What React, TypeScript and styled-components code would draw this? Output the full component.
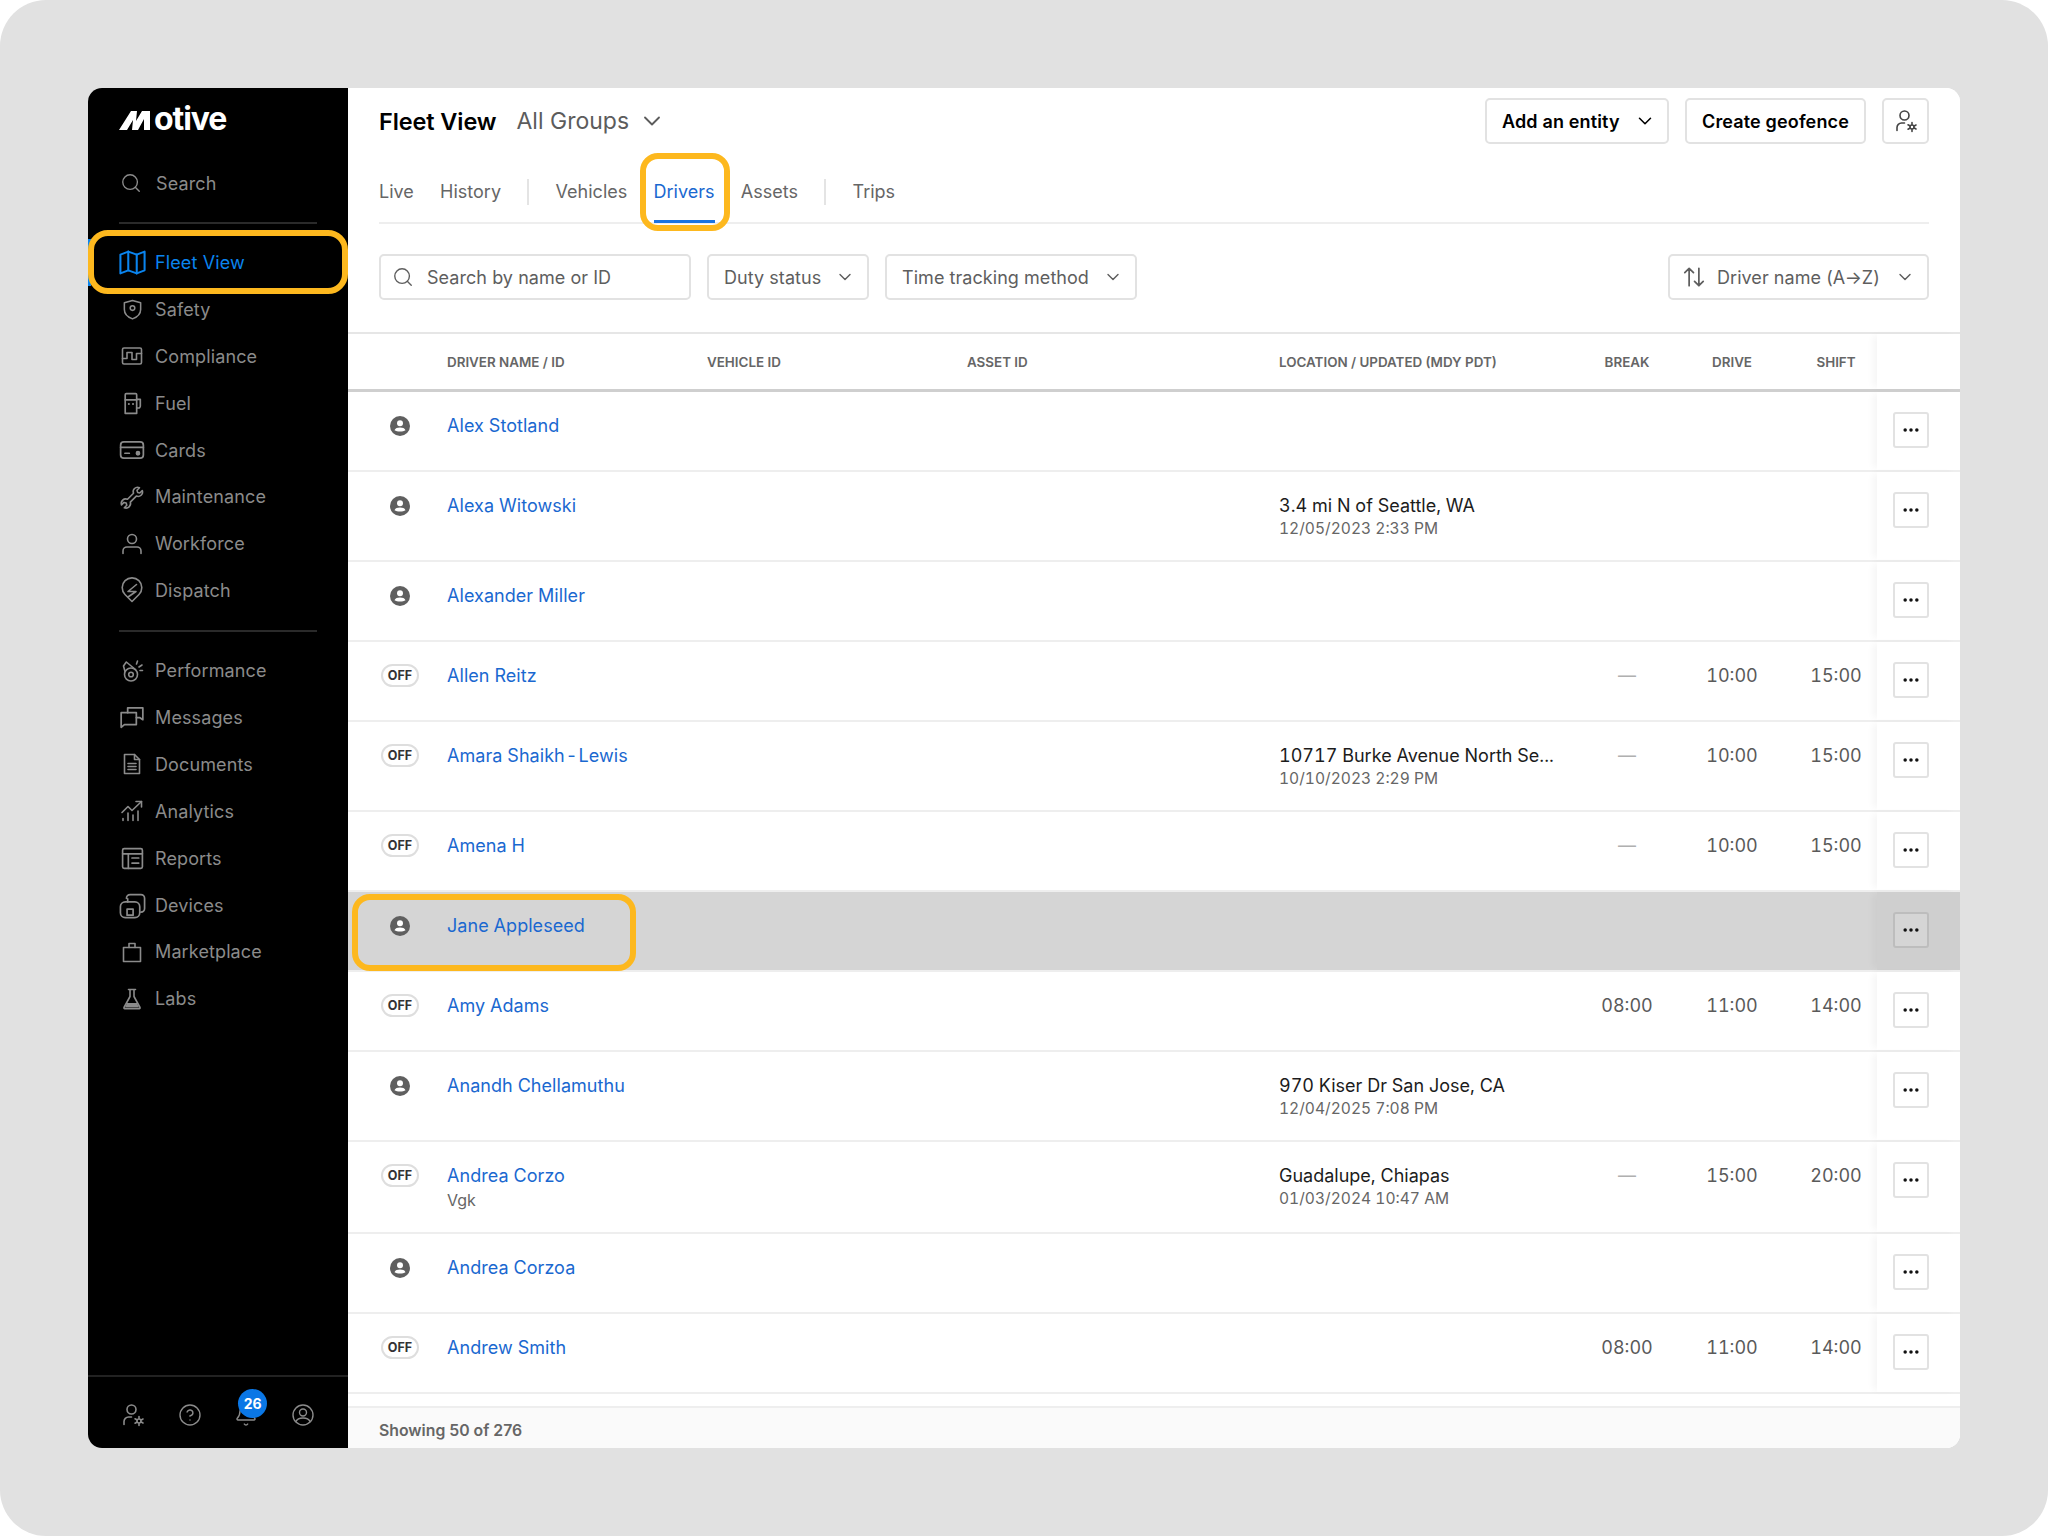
import React from 'react';
import styled, { createGlobalStyle } from 'styled-components';
import { ChevronDown, Search as SearchIcon, Bell, CircleHelp, Ellipsis } from 'lucide-react';

const Global = createGlobalStyle`
  html, body { margin: 0; padding: 0; background: #fff; }
  * { box-sizing: border-box; }
  body { font-family: Inter, "Liberation Sans", sans-serif; }
`;

const Frame = styled.div`
  width: 2048px; height: 1536px; padding: 88px;
  background: #e1e1e1; border-radius: 46px;
`;
const Shell = styled.div`
  display: grid; grid-template-columns: 260px 1612px; height: 1360px;
  border-radius: 14px; overflow: hidden; background: #fff;
`;
const Sidebar = styled.aside`
  background: #000; display: flex; flex-direction: column; color: #8b8b8b;
`;
const LogoRow = styled.div`
  display: flex; align-items: baseline; height: 62px; padding: 14px 0 0 31px;
`;
const LogoWord = styled.span`
  color: #fff; font-size: 32px; font-weight: 700; letter-spacing: -1.1px; line-height: 34px; margin-left: 1px;
`;
const SideSearch = styled.div`
  display: flex; align-items: center; height: 44px; margin-top: 11px; padding-left: 32px; gap: 14px;
  font-size: 18px; letter-spacing: 0.12px;
`;
const SideRule = styled.div<{ $top?: number }>`
  height: 2px; margin: ${p => p.$top ?? 0}px 31px 0; background: #2a2a2a;
`;
const SideGroup = styled.nav`
  display: flex; flex-direction: column; padding: 15px 0 16px;
`;
const NavItem = styled.div<{ $active?: boolean }>`
  position: relative; display: flex; align-items: center; height: 46.9px; padding-left: 31px;
  font-size: 18px; letter-spacing: 0.12px; color: ${p => (p.$active ? '#0a84ee' : '#8b8b8b')};
  ${p => p.$active && 'box-shadow: inset 3px 0 0 #0a84ee;'}
`;
const IconSlot = styled.span`
  display: flex; width: 26px; height: 26px; align-items: center; justify-content: center;
  margin-right: 10px; flex: none;
  svg { overflow: visible; }
`;
const SideFlag = styled.div`
  position: absolute; left: 0; top: -9px; width: 260px; height: 64px;
  border: 6px solid #fdb81e; border-radius: 20px; pointer-events: none;
`;
const SideFoot = styled.div`
  margin-top: auto; height: 73px; border-top: 2px solid #222;
  display: grid; grid-template-columns: repeat(4, 56.5px); padding: 4px 0 0 17px; align-items: center;
  justify-items: center;
`;
const BellWrap = styled.span`
  position: relative; display: flex;
`;
const Badge = styled.span`
  position: absolute; left: 4px; top: -14px; width: 29px; height: 29px; border-radius: 50%;
  background: #0a77e6; color: #fff; font-size: 14px; font-weight: 700;
  display: flex; align-items: center; justify-content: center;
`;
const Main = styled.main`
  display: flex; flex-direction: column; min-width: 0; background: #fff;
`;
const TopBar = styled.header`
  display: flex; align-items: center; padding: 10px 31px 0; height: 56px;
`;
const PageTitle = styled.h1`
  margin: 0; font-size: 23.5px; font-weight: 600; color: #000; letter-spacing: -0.1px;
`;
const GroupPick = styled.div`
  display: flex; align-items: center; gap: 9px; margin-left: 20px; font-size: 23px; color: #5c5c5c;
`;
const TopActions = styled.div`
  margin-left: auto; display: flex; gap: 16px;
`;
const ActionButton = styled.button<{ $w?: number }>`
  height: 46px; width: ${p => p.$w ?? 181}px; display: flex; align-items: center; justify-content: space-between;
  padding: 0 11px 0 15px;
  background: #fff; border: 2px solid #e2e2e2; border-radius: 5px;
  font: 600 18px Inter, sans-serif; letter-spacing: 0.15px; color: #000; white-space: nowrap;
`;
const IconButton = styled(ActionButton)`
  width: 47px; padding: 0; justify-content: center; color: #444;
`;
const Tabs = styled.div`
  display: flex; align-items: stretch; height: 69px; margin: 11px 31px 0;
  border-bottom: 2px solid #eeeeee;
`;
const Tab = styled.div<{ $active?: boolean }>`
  position: relative; display: flex; align-items: center; height: 67px; padding-top: 6px;
  margin-right: 26.3px; font-size: 18px; color: ${p => (p.$active ? '#1a68d0' : '#666')};
  ${p => p.$active && `&::after { content: ''; position: absolute; left: 0; right: 0; bottom: -1px; height: 3px; background: #1a73e0; }`}
`;
const TabRule = styled.div`
  width: 2px; height: 26px; background: #e4e4e4; margin: 24px 26.3px 0 0;
`;
const TabFlag = styled.div`
  position: absolute; left: -14px; right: -15px; top: -2px; bottom: -9px;
  border: 6px solid #fdb81e; border-radius: 18px; pointer-events: none;
`;
const Filters = styled.div`
  display: flex; gap: 16px; margin: 30px 31px 0;
`;
const Field = styled.div<{ $w: number; $push?: boolean }>`
  width: ${p => p.$w}px; height: 46px; display: flex; align-items: center;
  padding: 0 12px 0 15px; border: 2px solid #e2e2e2; border-radius: 5px;
  font-size: 18px; letter-spacing: 0.05px; color: #5e5e5e; flex: none;
  ${p => p.$push && 'margin-left: auto;'}
`;
const FieldLabel = styled.span`
  flex: 1; white-space: nowrap;
`;
const FieldLead = styled.span<{ $gap: number }>`
  display: flex; margin: 0 ${p => p.$gap}px 0 -4px;
`;
const TableHead = styled.div`
  display: grid; grid-template-columns: 99px 260px 260px 312px 303px 90px 120px 85px 83px;
  height: 60px; margin-top: 32px; align-items: center;
  border-top: 2px solid #e6e6e6; border-bottom: 3px solid #cfcfcf;
  font-size: 13.4px; font-weight: 600; color: #666;
`;
const HeadCenter = styled.span<{ $nudge?: number }>`
  text-align: center; padding-left: ${p => p.$nudge ?? 0}px;
`;
const HeadLead = styled.span``;
const HeadPin = styled.span`
  align-self: stretch; box-shadow: -6px 0 7px -2px rgba(0,0,0,.04);
`;
const Rows = styled.div`
  flex: 1; min-height: 0; overflow: hidden;
`;
const Row = styled.div<{ $picked?: boolean }>`
  position: relative; display: grid;
  grid-template-columns: 99px 260px 260px 312px 303px 90px 120px 85px 83px;
  border-bottom: 2px solid #eeeeee; background: ${p => (p.$picked ? '#d5d5d5' : '#fff')};
  font-size: 18px; line-height: 24px; font-variant-numeric: tabular-nums;
`;
const Cell = styled.div`
  padding: 22px 0 20px;
  min-height: 78px;
`;
const StatusCell = styled(Cell)`
  padding-left: 33px;
`;
const StatusBox = styled.div`
  width: 38px; height: 24px; display: flex; align-items: center; justify-content: center;
`;
const OffPill = styled.span`
  width: 38px; height: 23px; border: 2px solid #dedede; border-radius: 12px; background: #fff;
  font-size: 12.5px; font-weight: 700; color: #333; line-height: 19px; text-align: center; margin-top: -2px;
`;
const DriverName = styled.div`
  color: #1a68d0; letter-spacing: 0.05px;
`;
const NameHyphen = styled.span`
  margin: 0 1px;
`;
const SubText = styled.div`
  font-size: 16px; line-height: 24px; color: #666;
`;
const LocationText = styled.div`
  color: #1c1c1c; white-space: nowrap;
`;
const LocationDate = styled(SubText)`
  font-size: 15.6px; line-height: 22px;
`;
const TimeCell = styled(Cell)<{ $nudge?: number }>`
  text-align: center; color: #5a5a5a; padding-left: ${p => p.$nudge ?? 0}px;
`;
const Dash = styled.span`
  color: #b0b0b0;
`;
const PinCell = styled(Cell)<{ $picked?: boolean }>`
  padding: 20px 0 22px 16px; box-shadow: -6px 0 7px -2px rgba(0,0,0,.04);
  background: ${p => (p.$picked ? '#cfcfcf' : '#fff')};
`;
const MoreButton = styled.button<{ $picked?: boolean }>`
  width: 36px; height: 36px; padding: 0; display: flex; align-items: center; justify-content: center;
  background: ${p => (p.$picked ? '#d5d5d5' : '#fff')}; color: #111;
  border: 2px solid ${p => (p.$picked ? '#bdbdbd' : '#e2e2e2')}; border-radius: 3px;
`;
const RowFlag = styled.div`
  position: absolute; left: 4px; top: 2px; width: 284px; height: 77px;
  border: 6px solid #fdb81e; border-radius: 18px; pointer-events: none;
`;
const Foot = styled.footer`
  height: 42px; background: #fafafa; border-top: 2px solid #eee; padding: 4px 31px 0;
  display: flex; align-items: center; font-size: 15.8px; font-weight: 600; color: #666;
`;
const LogoMark = styled.svg`
  flex: none;
`;

const Svg = ({ s = 24, w = 1.6, children }: { s?: number; w?: number; children: React.ReactNode }) => (
  <svg width={s} height={s} viewBox="0 0 24 24" fill="none" stroke="currentColor" strokeWidth={w} strokeLinecap="round" strokeLinejoin="round">
    {children}
  </svg>
);

const icons: Record<string, React.ReactNode> = {
  map: <Svg s={29} w={1.7}><path d="M2 5.5 8.5 3l7 2.5L22 3v15.5L15.5 21l-7-2.5L2 21z" /><path d="M8.5 3v15.5M15.5 5.5V21" /></Svg>,
  shield: <Svg s={23}><path d="M12 2.5 20.5 5v7c0 4.8-3.6 8-8.5 9.8C7.100 20 3.500 16.800 3.500 12V5z" /><circle cx="12" cy="10.500" r="2.400" /></Svg>,
  compliance: <Svg s={24}><rect x="2.500" y="4" width="19" height="16" rx="1.500" /><path d="M2.500 14.500H7V8.500h5V15.500h4.500v-6h5" /></Svg>,
  fuel: <Svg s={25}><path d="M5 21.500V3.500a1 1 0 0 1 1-1h9a1 1 0 0 1 1 1v18z" /><path d="M5 8.500h11M16 8h3.500v6.500a1.800 1.800 0 0 1-2 1.800H16" /><path d="M8.500 12.500h.01M12.500 12.500h.01" strokeWidth="2" /></Svg>,
  card: <Svg s={26}><rect x="1.500" y="4.500" width="21" height="15" rx="3" /><path d="M1.500 9.500h21M5.500 15h4" /><circle cx="17.500" cy="15" r="1.400" fill="currentColor" /></Svg>,
  wrench: <Svg s={24}><path d="M14.500 3.500a4.500 4.500 0 0 1 5-.8L17 5.200l.6 2.200 2.200.6 2.500-2.500a4.500 4.500 0 0 1-6 5.600l-6 6a4.500 4.500 0 0 1-6 5.600l2.500-2.500-.6-2.200-2.200-.6-2.500 2.500a4.500 4.500 0 0 1 6-5.600l6-6a4.500 4.500 0 0 1 1-4.800z" /></Svg>,
  user: <Svg s={24}><circle cx="12" cy="7" r="4.500" /><path d="M3 21.500V19a4 4 0 0 1 4-4h10a4 4 0 0 1 4 4v2.500" /></Svg>,
  dispatch: <Svg s={24}><path d="M12 22.500 5 15.500a9.800 9.800 0 1 1 14 0z" /><path d="M16.500 5.500 8 12.500h8L8 18" /></Svg>,
  perf: <Svg s={24}><circle cx="11" cy="15.500" r="6.500" /><circle cx="11" cy="15.500" r="2.300" /><path d="M5 12.500 3.500 7l2.800-4 9.200 7.500M16.500 5l1-3M19 8l3-2M20 11.500h2.500" /></Svg>,
  messages: <Svg s={26}><path d="M8 8V3.500h14v11l-3-2h-3" /><path d="M2 8h14v11H5l-3 2.500z" /></Svg>,
  doc: <Svg s={24}><path d="M4.500 2.500h10l5 5v14h-15z" /><path d="M14.500 2.500v5h5M8 11.500h8M8 14.500h8M8 17.500h8" /></Svg>,
  analytics: <Svg s={24}><path d="M2 13.500 8 7.500l4 4 9.500-9" /><path d="M16 2.500h5.500V8" /><path d="M3 21.500v-2M8 21.500V14M13 21.500V16M18 21.500v-9.500" /></Svg>,
  reports: <Svg s={25}><rect x="2.500" y="2.500" width="19" height="19" rx="1.500" /><path d="M2.500 7.500h19M8 7.500v14M11.500 11.500h6.500M11.500 16.500h6.500" /></Svg>,
  devices: <Svg s={29} w={1.4}><path d="M7 6a3 3 0 0 1 3-3h9a3 3 0 0 1 3 3v8.500a3 3 0 0 1-3 3" /><rect x="2" y="9" width="16" height="13" rx="4" /><rect x="7.500" y="15" width="5" height="5" /><path d="M8 9V6.500" /></Svg>,
  bag: <Svg s={24}><path d="M3.500 7.500h17v14h-17z" /><path d="M9 7.500V3.500h6v4" /></Svg>,
  flask: <Svg s={24}><path d="M8.500 2.500h7M10 2.500v7L4 20.500a.8.8 0 0 0 .8 1.200h14.400a.8.8 0 0 0 .8-1.200L14 9.500v-7" /><path d="M7 16h10l2 4.500H5z" fill="currentColor" stroke="none" /></Svg>,
  userCog: <Svg s={24}><circle cx="10.500" cy="6.500" r="4.500" /><path d="M3 21.500v-3a4.500 4.500 0 0 1 4.500-4.500h3" /><circle cx="18" cy="18" r="2" /><path d="M18 13.500v2M18 20.500v2M14 15.800l1.800 1M20.200 19l1.800 1M14 20.200l1.800-1M20.200 17l1.800-1" /></Svg>,
  circleUser: <Svg s={24} w={1.4}><circle cx="12" cy="12" r="10" /><circle cx="12" cy="9.500" r="3.500" /><path d="M5 18.500c1-2.500 3-3.500 7-3.500s6 1 7 3.500" /></Svg>,
  sort: <Svg s={26}><path d="M7.500 20V4M3.500 8l4-4 4 4M16.500 4v16M12.500 16l4 4 4-4" /></Svg>,
};

const nav1 = [
  ['shield', 'Safety'], ['compliance', 'Compliance'], ['fuel', 'Fuel'], ['card', 'Cards'],
  ['wrench', 'Maintenance'], ['user', 'Workforce'], ['dispatch', 'Dispatch'],
];
const nav2 = [
  ['perf', 'Performance'], ['messages', 'Messages'], ['doc', 'Documents'], ['analytics', 'Analytics'],
  ['reports', 'Reports'], ['devices', 'Devices'], ['bag', 'Marketplace'], ['flask', 'Labs'],
];

type Driver = { name: string; off?: boolean; sub?: string; loc?: string; date?: string; t?: [string, string, string]; picked?: boolean };
const duty: [string, string, string] = ['—', '10:00', '15:00'];
const drivers: Driver[] = [
  { name: 'Alex Stotland' },
  { name: 'Alexa Witowski', loc: '3.4 mi N of Seattle, WA', date: '12/05/2023 2:33 PM' },
  { name: 'Alexander Miller' },
  { name: 'Allen Reitz', off: true, t: duty },
  { name: 'Amara Shaikh-Lewis', off: true, loc: '10717 Burke Avenue North Se...', date: '10/10/2023 2:29 PM', t: duty },
  { name: 'Amena H', off: true, t: duty },
  { name: 'Jane Appleseed', picked: true },
  { name: 'Amy Adams', off: true, t: ['08:00', '11:00', '14:00'] },
  { name: 'Anandh Chellamuthu', loc: '970 Kiser Dr San Jose, CA', date: '12/04/2025 7:08 PM' },
  { name: 'Andrea Corzo', off: true, sub: 'Vgk', loc: 'Guadalupe, Chiapas', date: '01/03/2024 10:47 AM', t: ['—', '15:00', '20:00'] },
  { name: 'Andrea Corzoa' },
  { name: 'Andrew Smith', off: true, t: ['08:00', '11:00', '14:00'] },
];

const Avatar = () => (
  <svg width="20" height="20" viewBox="0 0 20 20">
    <circle cx="10" cy="10" r="10" fill="#5f5f5f" />
    <circle cx="10" cy="7.300" r="3" fill="#fff" />
    <path d="M4.500 14.200c.8-2 2.800-2.700 5.500-2.700s4.700.7 5.500 2.700c-1.300.9-3.300 1.300-5.500 1.300s-4.200-.4-5.500-1.300z" fill="#fff" />
  </svg>
);

const nameParts = (name: string) => {
  const [first, second] = name.split('-');
  return second === undefined ? first : <>{first}<NameHyphen>-</NameHyphen>{second}</>;
};

export default function App() {
  return (
    <>
      <Global />
      <Frame>
        <Shell>
          <Sidebar>
            <LogoRow>
              <LogoMark width="34" height="19" viewBox="0 0 34 19" fill="#fff">
                <path d="M0 19 12 0h6l-1 10L23 0h8v19h-6V8l-6 11h-6l1-10-6 10z" />
              </LogoMark>
              <LogoWord>otive</LogoWord>
            </LogoRow>
            <SideSearch><SearchIcon size={22} strokeWidth={1.5} />Search</SideSearch>
            <SideRule $top={17} />
            <SideGroup>
              <NavItem $active>
                <IconSlot>{icons.map}</IconSlot>Fleet View
                <SideFlag />
              </NavItem>
              {nav1.map(([i, l]) => (
                <NavItem key={l}><IconSlot>{icons[i]}</IconSlot>{l}</NavItem>
              ))}
            </SideGroup>
            <SideRule />
            <SideGroup>
              {nav2.map(([i, l]) => (
                <NavItem key={l}><IconSlot>{icons[i]}</IconSlot>{l}</NavItem>
              ))}
            </SideGroup>
            <SideFoot>
              {icons.userCog}
              <CircleHelp size={24} strokeWidth={1.4} />
              <BellWrap><Bell size={24} strokeWidth={1.4} /><Badge>26</Badge></BellWrap>
              {icons.circleUser}
            </SideFoot>
          </Sidebar>
          <Main>
            <TopBar>
              <PageTitle>Fleet View</PageTitle>
              <GroupPick>All Groups <ChevronDown size={28} strokeWidth={1.6} /></GroupPick>
              <TopActions>
                <ActionButton $w={184}>Add an entity <ChevronDown size={22} strokeWidth={1.7} /></ActionButton>
                <ActionButton $w={181}>Create geofence</ActionButton>
                <IconButton>{icons.userCog}</IconButton>
              </TopActions>
            </TopBar>
            <Tabs>
              <Tab>Live</Tab>
              <Tab>History</Tab>
              <TabRule />
              <Tab>Vehicles</Tab>
              <Tab $active>Drivers<TabFlag /></Tab>
              <Tab>Assets</Tab>
              <TabRule />
              <Tab>Trips</Tab>
            </Tabs>
            <Filters>
              <Field $w={312}>
                <FieldLead $gap={13}><SearchIcon size={22} strokeWidth={1.5} /></FieldLead>
                <FieldLabel>Search by name or ID</FieldLabel>
              </Field>
              <Field $w={162}>
                <FieldLabel>Duty status</FieldLabel><ChevronDown size={20} strokeWidth={1.7} />
              </Field>
              <Field $w={252}>
                <FieldLabel>Time tracking method</FieldLabel><ChevronDown size={20} strokeWidth={1.7} />
              </Field>
              <Field $w={261} $push>
                <FieldLead $gap={10}>{icons.sort}</FieldLead>
                <FieldLabel>Driver name (A→Z)</FieldLabel><ChevronDown size={20} strokeWidth={1.7} />
              </Field>
            </Filters>
            <TableHead>
              <span />
              <HeadLead>DRIVER NAME / ID</HeadLead>
              <HeadLead>VEHICLE ID</HeadLead>
              <HeadLead>ASSET ID</HeadLead>
              <HeadLead>LOCATION / UPDATED (MDY PDT)</HeadLead>
              <HeadCenter>BREAK</HeadCenter>
              <HeadCenter>DRIVE</HeadCenter>
              <HeadCenter $nudge={3}>SHIFT</HeadCenter>
              <HeadPin />
            </TableHead>
            <Rows>
              {drivers.map(d => (
                <Row key={d.name} $picked={d.picked}>
                  <StatusCell>
                    <StatusBox>{d.off ? <OffPill>OFF</OffPill> : <Avatar />}</StatusBox>
                  </StatusCell>
                  <Cell>
                    <DriverName>{nameParts(d.name)}</DriverName>
                    {d.sub && <SubText>{d.sub}</SubText>}
                  </Cell>
                  <Cell />
                  <Cell />
                  <Cell>
                    {d.loc && <LocationText>{d.loc}</LocationText>}
                    {d.date && <LocationDate>{d.date}</LocationDate>}
                  </Cell>
                  {(d.t ?? ['', '', '']).map((v, i) => (
                    <TimeCell key={i} $nudge={i === 2 ? 3 : 0}>{v === '—' ? <Dash>—</Dash> : v}</TimeCell>
                  ))}
                  <PinCell $picked={d.picked}>
                    <MoreButton $picked={d.picked}><Ellipsis size={20} strokeWidth={2.2} /></MoreButton>
                  </PinCell>
                  {d.picked && <RowFlag />}
                </Row>
              ))}
            </Rows>
            <Foot>Showing 50 of 276</Foot>
          </Main>
        </Shell>
      </Frame>
    </>
  );
}
